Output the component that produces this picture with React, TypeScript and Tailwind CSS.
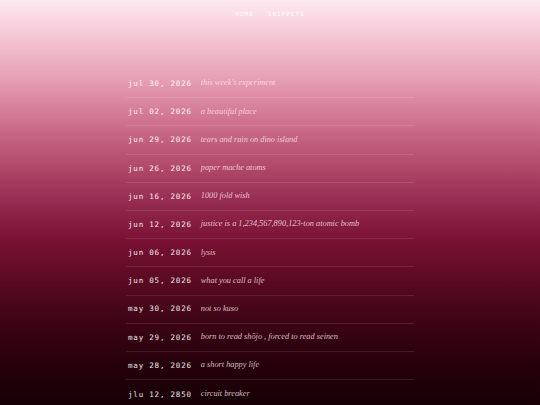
import React from "react";

const posts = [
  { date: "jul 30, 2026", title: "this week's experiment" },
  { date: "jul 02, 2026", title: "a beautiful place" },
  { date: "jun 29, 2026", title: "tears and rain on dino island" },
  { date: "jun 26, 2026", title: "paper mache atoms" },
  { date: "jun 16, 2026", title: "1000 fold wish" },
  { date: "jun 12, 2026", title: "justice is a 1,234,567,890,123-ton atomic bomb" },
  { date: "jun 06, 2026", title: "lysis" },
  { date: "jun 05, 2026", title: "what you call a life" },
  { date: "may 30, 2026", title: "not so kuso" },
  { date: "may 29, 2026", title: "born to read shōjo , forced to read seinen" },
  { date: "may 28, 2026", title: "a short happy life" },
  { date: "jlu 12, 2850", title: "circuit breaker" },
];

export default function App() {
  return (
    <div className="h-screen overflow-hidden bg-[linear-gradient(to_bottom,#fde9f0_0%,#f3c3d2_10%,#e69db3_20%,#cf7290_30%,#b44d6e_40%,#952b50_50%,#771032_60%,#580a22_70%,#3c0414_80%,#26000b_90%,#170006_100%)]">
      <nav className="flex justify-center gap-[14px] pt-[11px] font-['DejaVu_Sans_Mono',monospace] text-[6px] uppercase leading-[6px] tracking-[1px] text-white/90">
        <a>home</a>
        <a>snippets</a>
      </nav>

      <ul className="mx-auto mt-[53px] w-[288px]">
        {posts.map((p, i) => (
          <li
            key={p.date + p.title}
            className={
              "flex h-[28.2px] items-center gap-[9px] px-[2px] " +
              (i < posts.length - 1 ? "border-b border-white/10" : "")
            }
          >
            <span className="font-['DejaVu_Sans_Mono',monospace] text-[7.5px] tracking-[0.8px] text-white/90">
              {p.date}
            </span>
            <span className="font-['Liberation_Serif',serif] text-[8.3px] italic text-[#ffe4ec]/80">
              {p.title}
            </span>
          </li>
        ))}
      </ul>
    </div>
  );
}
